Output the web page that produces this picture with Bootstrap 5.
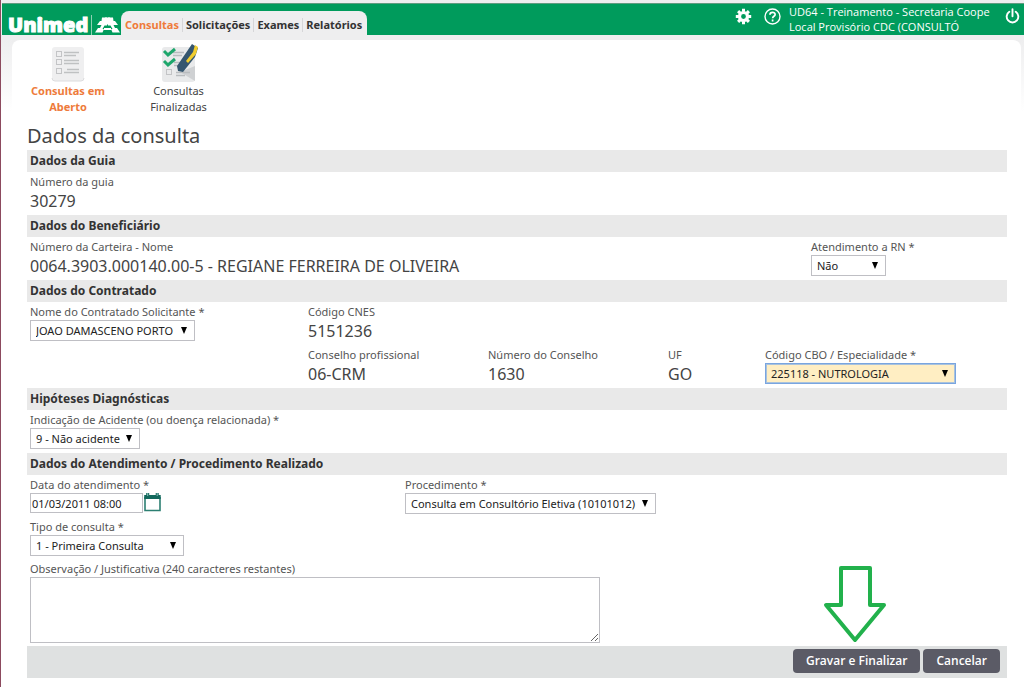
<!DOCTYPE html>
<html lang="pt-BR">
<head>
<meta charset="utf-8">
<meta name="viewport" content="width=device-width, initial-scale=1">
<title>Unimed - Dados da consulta</title>
<link href="https://cdn.jsdelivr.net/npm/bootstrap@5.3.0/dist/css/bootstrap.min.css" rel="stylesheet">
<style>
  body { font-family: "Noto Sans", sans-serif; font-size: 11px; line-height: 16px; color: #444; background: #fff; border-left: 1px solid #8c4a5e; min-height: 100vh; }
  .backdrop { background: linear-gradient(#eeeeef 40px, #fff 112px); padding-top: 3px; }
  .topbar { background: #009b5c; height: 32px; border-top: 1px solid #5f9c80; margin-left: 1px; }
  .brand-link { padding-left: 6px; }
  .brand { font-family: "Noto Sans", sans-serif; font-weight: 900; font-size: 20px; line-height: 20px; width: 81px; color: #fff; -webkit-text-stroke: 1px #fff; }
  .brand-rule { width: 1px; height: 20px; background: #8fd0b2; margin: 0 2px; }
  .main-tabs { background: #eeeeef; border-radius: 8px 8px 0 0; height: 24px; padding: 3px 2px 0 1px; }
  .main-tabs a { font-size: 11px; font-weight: 700; color: #333; text-decoration: none; line-height: 14px; padding: 0 3px; border-left: 1px solid #d6d6d8; }
  .main-tabs a:first-child { border-left: 0; }
  .main-tabs a.active, .submenu a.active { color: #ee7b3b; }
  .account { font-family: "Open Sans", sans-serif; font-size: 11px; line-height: 15px; color: #fff; width: 212px; }
  .icon-btn { border: 0; background: none; padding: 0; line-height: 0; }
  .panel { background: #fff; border-radius: 8px 8px 0 0; margin: 5px 3px 0 11px; padding: 7px 14px 9px 15px; }
  .submenu a { width: 111px; color: #444; text-decoration: none; text-align: center; padding: 0 16px; }
  .submenu .first { width: 82px; padding: 0; margin-right: 14px; }
  .submenu a.active { font-weight: 700; }
  h1 { font-size: 20px; line-height: 28px; font-weight: 400; color: #444; margin: 7px 0 0; }
  .section-bar { background: #e9e9e9; font-size: 12px; line-height: 22px; font-weight: 700; color: #333; padding: 0 3px; margin: 0; }
  .fields { display: grid; padding-left: 3px; }
  .fields > div { padding-top: 2px; min-height: 42px; }
  .fields > .tall { min-height: 43px; }
  .cols-ben { grid-template-columns: 781fr 196fr; }
  .cols-con { grid-template-columns: 278fr 180fr 180fr 97fr 242fr; }
  .cols-ate { grid-template-columns: 375fr 602fr; }
  label, .term { display: block; font-size: 11px; line-height: 16px; color: #555; font-weight: 400; }
  .val { font-size: 16px; line-height: 23px; height: 25px; color: #444; margin: 0; white-space: nowrap; }
  .ctl { display: block; height: 21px; border: 1px solid #bfbfc4; border-radius: 0; font-size: 11px; line-height: 16px; color: #222; padding: 0 16px 0 5px; background-color: #fff; }
  select.ctl { appearance: none; background-image: url("data:image/svg+xml,%3Csvg xmlns='http://www.w3.org/2000/svg' width='6' height='7'%3E%3Cpath d='M0 0h6L3 7z' fill='%23000'/%3E%3C/svg%3E"); background-repeat: no-repeat; background-position: right 7px top 6px; }
  select.chosen { background-color: #ffeec3; border-color: #79a5e0; box-shadow: inset 0 0 0 1px #a9c2dc; }
  input.ctl { height: 20px; width: 113px; padding: 0 1px; }
  textarea.ctl { width: 570px; max-width: 100%; height: 66px; padding: 2px; }
  .w-rn { width: 75px; } .w-nome { width: 165px; } .w-cbo { width: 191px; } .w-acid { width: 110px; } .w-proc { width: 251px; } .w-tipo { width: 154px; }
  .actions { background: #dfe1e1; padding: 3px 7px 5px; margin-top: 3px; gap: 3px; }
  .act { background: #5b5b66; color: #fff; border: 0; border-radius: 4px; font-family: "Open Sans", sans-serif; font-size: 12px; line-height: 16px; font-weight: 600; padding: 4px 13px; height: 24px; }
  .pointer { position: absolute; right: 120px; bottom: 100%; }
</style>
</head>
<body>
<div class="backdrop">
  <header class="topbar d-flex justify-content-between">
    <div class="d-flex align-items-end">
      <a class="brand-link d-flex align-items-center text-decoration-none" href="#">
        <span class="brand">Unimed</span>
        <span class="brand-rule"></span>
        <svg width="27" height="20" viewBox="0 0 27 20" fill="#fff" aria-hidden="true"><path d="M8 2.500h5v3l-1.500 2H13v3h-2.500l-2 3.500H10l-1.500 3.500H1L4 13h2l1.500-3H3l3-4h1.500zM19 2.500h-5v3l1.500 2H14v3h2.500l2 3.500H17l1.500 3.500H26L23 13h-2l-1.500-3H24l-3-4h-1.500z"/><path d="M11 2.500h5v7h-5zM10 13h7v2h-7z"/></svg>
      </a>
      <nav class="main-tabs d-flex align-items-center" aria-label="Principal">
        <a class="active" href="#">Consultas</a><a href="#">Solicitações</a><a href="#">Exames</a><a href="#">Relatórios</a>
      </nav>
    </div>
    <div class="d-flex align-items-start pe-1">
      <button class="icon-btn mt-1 me-2" type="button" aria-label="Configurações"><svg width="17" height="17" viewBox="0 0 17 17"><circle cx="8.500" cy="8.500" r="4" fill="none" stroke="#fff" stroke-width="3.200"/><path d="M8.500 .8v3M8.500 13.200v3M.8 8.500h3M13.200 8.500h3M3.100 3.100l2 2M11.900 11.900l2 2M13.900 3.100l-2 2M5.100 11.900l-2 2" stroke="#fff" stroke-width="3"/></svg></button>
      <button class="icon-btn mt-1 me-2" type="button" aria-label="Ajuda"><svg class="ms-1" width="17" height="17" viewBox="0 0 17 17" fill="none" stroke="#fff" stroke-width="1.400"><circle cx="8.500" cy="8.500" r="7.500"/><path d="M5.900 6.800c0-3.300 5.400-3.200 5.200-.2-.1 1.700-2.500 1.600-2.500 3.600M8.600 11.500v2" stroke-width="1.700"/></svg></button>
      <div class="account">UD64 - Treinamento - Secretaria Coope<br>Local Provisório CDC (CONSULTÓ</div>
      <button class="icon-btn mt-1 ms-1" type="button" aria-label="Sair"><svg width="15" height="16" viewBox="0 0 15 16" fill="none" stroke="#fff" stroke-width="1.900" stroke-linecap="round"><path d="M4.300 3.800a5.800 5.800 0 1 0 6.400 0M7.500 1.200v7"/></svg></button>
    </div>
  </header>

  <main class="panel">
    <nav class="submenu d-flex" aria-label="Consultas">
      <a class="first active" href="#">
        <svg class="d-block mx-auto" width="34" height="36" viewBox="0 0 34 36"><rect x="1" y="0" width="32" height="34" rx="3" fill="#efeff0"/><path d="M1 31q0 3 3 3h26q3 0 3-3" fill="none" stroke="#dcdcde"/><g fill="none" stroke="#c3c4c6"><rect x="5.500" y="4.500" width="5" height="5"/><rect x="5.500" y="12.500" width="5" height="5"/><rect x="5.500" y="21.500" width="5" height="5"/></g><path d="M13 5.500h15M13 8.500h12M13 13.500h15M13 16.500h15M16 22.500h12M13 25.500h15" stroke="#bfc1c2" stroke-width="1.500"/></svg>
        Consultas em Aberto
      </a>
      <a href="#">
        <svg class="d-block mx-auto" width="40" height="36" viewBox="0 0 40 36" overflow="visible"><rect x="3" y="0" width="33" height="35" rx="3" fill="#e9eaeb"/><path d="M21 25l15 9V19z" fill="#cfd1d3"/><path d="M14 5.500h11M14 8.500h9M15 15.500h7M15 18.500h5M17 25.500h14M17 28.500h9" stroke="#b9bcbe" stroke-width="1.500"/><rect x="7.500" y="22.500" width="5" height="5" fill="none" stroke="#c3c4c6"/><path d="M5 4l4 4 7-6M5 14l4 4 7-6" fill="none" stroke="#1ea66c" stroke-width="3"/><path d="M33-3l6 4-3 9-12 15-5-1-1-5z" fill="#35566f"/><path d="M36-2l3 2-2 7-8 9-2-2 7-9z" fill="#f1cd2f"/></svg>
        Consultas Finalizadas
      </a>
    </nav>

    <form>
      <h1>Dados da consulta</h1>

      <h2 class="section-bar">Dados da Guia</h2>
      <div class="fields"><div><span class="term">Número da guia</span><p class="val">30279</p></div></div>

      <h2 class="section-bar">Dados do Beneficiário</h2>
      <div class="fields cols-ben">
        <div><span class="term">Número da Carteira - Nome</span><p class="val">0064.3903.000140.00-5 - REGIANE FERREIRA DE OLIVEIRA</p></div>
        <div><label for="rn">Atendimento a RN *</label><select id="rn" class="ctl w-rn"><option>Não</option><option>Sim</option></select></div>
      </div>

      <h2 class="section-bar">Dados do Contratado</h2>
      <div class="fields cols-con">
        <div><label for="nome">Nome do Contratado Solicitante *</label><select id="nome" class="ctl w-nome"><option>JOAO DAMASCENO PORTO</option></select></div>
        <div style="grid-column: span 4"><span class="term">Código CNES</span><p class="val">5151236</p></div>
        <div></div>
        <div><span class="term">Conselho profissional</span><p class="val">06-CRM</p></div>
        <div><span class="term">Número do Conselho</span><p class="val">1630</p></div>
        <div><span class="term">UF</span><p class="val">GO</p></div>
        <div><label for="cbo">Código CBO / Especialidade *</label><select id="cbo" class="ctl chosen w-cbo"><option>225118 - NUTROLOGIA</option></select></div>
      </div>

      <h2 class="section-bar">Hipóteses Diagnósticas</h2>
      <div class="fields"><div class="tall"><label for="acid">Indicação de Acidente (ou doença relacionada) *</label><select id="acid" class="ctl w-acid"><option>9 - Não acidente</option></select></div></div>

      <h2 class="section-bar">Dados do Atendimento / Procedimento Realizado</h2>
      <div class="fields cols-ate">
        <div><label for="data">Data do atendimento *</label>
          <div class="d-flex"><input id="data" class="ctl" type="text" value="01/03/2011 08:00"><button class="icon-btn" type="button" aria-label="Abrir calendário"><svg width="20" height="20" viewBox="0 0 20 20"><path d="M2 4v13.500h15V4" fill="#fff" stroke="#2c7f72" stroke-width="1.600"/><path d="M1.200 2h2V0h3v2h6.500V0h3v2h2v4H1.200z" fill="#13695d"/><path d="M4.700 0v3M14.200 0v3" stroke="#8fc0b8"/></svg></button></div>
        </div>
        <div><label for="proc">Procedimento *</label><select id="proc" class="ctl w-proc"><option>Consulta em Consultório Eletiva (10101012)</option></select></div>
        <div><label for="tipo">Tipo de consulta *</label><select id="tipo" class="ctl w-tipo"><option>1 - Primeira Consulta</option></select></div>
      </div>
      <div class="fields"><div><label for="obs">Observação / Justificativa (240 caracteres restantes)</label><textarea id="obs" class="ctl"></textarea></div></div>

      <div class="actions d-flex justify-content-end position-relative">
        <svg class="pointer" width="64" height="82" viewBox="0 0 64 82" fill="none" stroke="#22b14c" stroke-width="4" stroke-linejoin="round" aria-hidden="true"><path d="M18 4h29v37h14L32 76 3 41h15z"/></svg>
        <button class="act" type="submit">Gravar e Finalizar</button>
        <button class="act" type="button">Cancelar</button>
      </div>
    </form>
  </main>
</div>
<script src="https://cdn.jsdelivr.net/npm/bootstrap@5.3.0/dist/js/bootstrap.bundle.min.js"></script>
</body>
</html>
